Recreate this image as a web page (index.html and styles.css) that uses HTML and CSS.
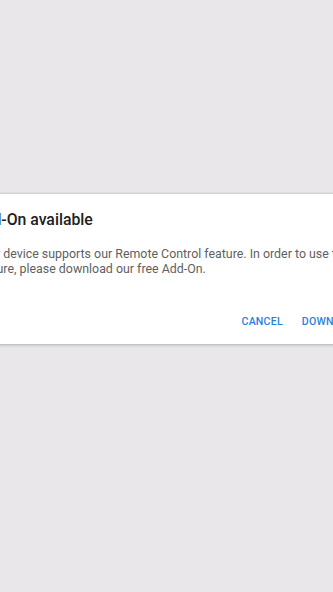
FILE: index.html
```html
<!DOCTYPE html>
<html>
<head>
<meta charset="utf-8">
<link rel="stylesheet" href="styles.css">
</head>
<body>
<div class="screen">
  <div class="dialog">
    <h2 class="title">Add-On available</h2>
    <p class="message">Your device supports our Remote Control feature. In order to use this feature, please download our free Add-On.</p>
    <div class="actions">
      <span class="btn">Cancel</span>
      <span class="btn">Download</span>
    </div>
  </div>
</div>
</body>
</html>
```

FILE: styles.css
```css
html, body {
  margin: 0;
  padding: 0;
  background: #e9e7ea;
  overflow: hidden;
}
.screen {
  width: 333px;
  height: 592px;
  display: flex;
  flex-direction: column;
  justify-content: flex-start;
  overflow: hidden;
}
.dialog {
  margin-top: 194px;
  margin-left: -49px;
  width: 430px;
  height: 150px;
  box-sizing: border-box;
  background: #ffffff;
  padding: 0 24px;
  box-shadow: 0 1px 3px rgba(0,0,0,0.25), 0 -1px 2px rgba(0,0,0,0.08);
  font-family: Roboto, "Noto Sans", sans-serif;
  display: flex;
  flex-direction: column;
}
.title {
  margin: 16px 0 0 -2px;
  font-size: 15.8px;
  font-weight: 500;
  color: #212121;
  line-height: 20px;
}
.message {
  margin: 17px 0 0 0;
  font-size: 12.4px;
  line-height: 14.5px;
  color: #5f5f5f;
}
.actions {
  margin-top: auto;
  margin-bottom: 16px;
  margin-right: -4px;
  display: flex;
  justify-content: flex-end;
  gap: 19px;
}
.btn {
  font-size: 10.6px;
  font-weight: 500;
  text-transform: uppercase;
  color: #2a7fe0;
  letter-spacing: 0.2px;
}
```
